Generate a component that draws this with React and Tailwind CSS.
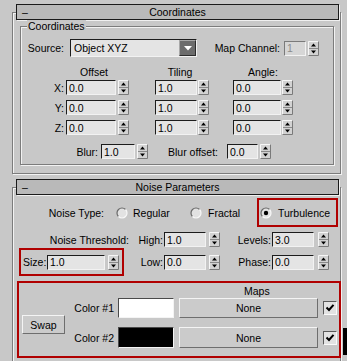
import React from "react";

const sunken =
  "border border-t-[#1c1c1c] border-l-[#1c1c1c] border-r-[#f2f2f2] border-b-[#f2f2f2]";
const raised =
  "border border-t-[#f4f4f4] border-l-[#f4f4f4] border-r-[#6e6e6e] border-b-[#6e6e6e]";

function Arrows() {
  return (
    <svg width="11" height="15" viewBox="0 0 11 15" className="shrink-0">
      <rect x="0" y="0" width="11" height="15" fill="#d2d2d2" />
      <path d="M0.5 14.5 V0.5 H10.5" stroke="#f6f6f6" fill="none" />
      <path d="M0.5 14.5 H10.5 V0.5" stroke="#7a7a7a" fill="none" />
      <path d="M1 7.5 H10" stroke="#8a8a8a" />
      <path d="M5.5 2.5 L8 5.5 L3 5.5 Z" fill="#000" />
      <path d="M3 9.5 L8 9.5 L5.5 12.5 Z" fill="#000" />
    </svg>
  );
}

function Spinner({ w, value, gap = "ml-[2px]", disabled }) {
  return (
    <div className="flex items-center shrink-0">
      <div
        className={`${w} h-[15px] flex items-center pl-[2px] ${
          disabled
            ? "bg-[#d6d6d6] text-[#8c8c8c] border border-t-[#7a7a7a] border-l-[#7a7a7a] border-r-[#f2f2f2] border-b-[#f2f2f2]"
            : `bg-[#e4e4e4] ${sunken}`
        }`}
      >
        {value}
      </div>
      <div className={gap}>
        <Arrows />
      </div>
    </div>
  );
}

function Radio({ on }) {
  return (
    <svg width="12" height="12" viewBox="0 0 12 12" className="shrink-0">
      <circle cx="6" cy="6" r="5" fill="#e2e2e2" />
      <path d="M2.46 9.54 A5 5 0 0 1 9.54 2.46" stroke="#6a6a6a" strokeWidth="1.2" fill="none" />
      <path d="M9.54 2.46 A5 5 0 0 1 2.46 9.54" stroke="#f8f8f8" strokeWidth="1.2" fill="none" />
      {on && <circle cx="6" cy="6" r="2.2" fill="#000" />}
    </svg>
  );
}

function Check() {
  return (
    <div className="w-[14px] h-[14px] bg-[#e2e2e2] border border-t-[#5a5a5a] border-l-[#5a5a5a] border-r-[#fafafa] border-b-[#fafafa] flex items-center justify-center">
      <svg width="10" height="10" viewBox="0 0 10 10">
        <path d="M1.5 4.5 L4 7 L8.5 1.8" stroke="#000" strokeWidth="2" fill="none" />
      </svg>
    </div>
  );
}

function Header({ title }) {
  return (
    <div className="-mt-[9px] ml-[3px] w-[323px] h-[16px] relative flex items-center justify-center bg-[#b9b9b9] border border-[#1a1a1a] shadow-[1px_1px_0_#f0f0f0]">
      <span className="absolute left-[5px] top-[1px]">–</span>
      <span>{title}</span>
    </div>
  );
}

export default function App() {
  return (
    <div className="w-[347px] h-[361px] bg-[#c8c8c8] relative overflow-hidden font-['Liberation_Sans',Arial,sans-serif] text-[10.5px] leading-[12px] text-black">
      {/* Coordinates rollout */}
      <div className="mt-[12px] ml-[12px] w-[329px] h-[162px] border border-[#7c7c7c] shadow-[inset_1px_1px_0_#f2f2f2,1px_1px_0_#f2f2f2]">
        <Header title="Coordinates" />
        <div className="mt-[6px] ml-[7px] w-[314px] h-[139px] relative border border-[#7c7c7c] shadow-[inset_1px_1px_0_#f2f2f2,1px_1px_0_#f2f2f2]">
          <span className="absolute -top-[7px] left-[6px] px-[1px] bg-[#c8c8c8]">Coordinates</span>

          <div className="mt-[12px] h-[18px] flex items-center">
            <span className="w-[49px] text-right pr-[6px] shrink-0">Source:</span>
            <div className={`w-[127px] h-[18px] flex items-center bg-[#e4e4e4] ${sunken}`}>
              <span className="flex-1 pl-[3px]">Object XYZ</span>
              <div className="w-[17px] h-[16px] flex items-center justify-center bg-[#6c6c6c] border border-t-[#a8a8a8] border-l-[#a8a8a8] border-r-[#2c2c2c] border-b-[#2c2c2c]">
                <svg width="8" height="5" viewBox="0 0 8 5">
                  <path d="M0 0 H8 L4 4.5 Z" fill="#fff" />
                </svg>
              </div>
            </div>
            <span className="w-[87px] text-right pr-[4px] shrink-0">Map Channel:</span>
            <Spinner w="w-[22px]" value="1" disabled />
          </div>

          <div className="mt-[9px] h-[12px] flex">
            <span className="ml-[45px] w-[56px] text-center">Offset</span>
            <span className="ml-[28px] w-[60px] text-center">Tiling</span>
            <span className="ml-[23px] w-[60px] text-center">Angle:</span>
          </div>

          {[
            ["X:", "mt-[2px]"],
            ["Y:", "mt-[5px]"],
            ["Z:", "mt-[5px]"],
          ].map(([l, m]) => (
            <div key={l} className={`${m} h-[15px] flex items-center`}>
              <span className="w-[45px] text-right pr-[2px] shrink-0">{l}</span>
              <Spinner w="w-[50px]" value="0.0" />
              <div className="ml-[26px]">
                <Spinner w="w-[42px]" value="1.0" gap="ml-[1px]" />
              </div>
              <div className="ml-[24px]">
                <Spinner w="w-[48px]" value="0.0" gap="ml-[1px]" />
              </div>
            </div>
          ))}

          <div className="mt-[9px] h-[15px] flex items-center">
            <span className="w-[80px] text-right pr-[3px] shrink-0">Blur:</span>
            <Spinner w="w-[34px]" value="1.0" />
            <span className="w-[79px] text-right pr-[9px] shrink-0">Blur offset:</span>
            <Spinner w="w-[31px]" value="0.0" />
          </div>
        </div>
      </div>

      {/* Noise Parameters rollout */}
      <div className="mt-[13px] ml-[12px] w-[329px] h-[200px] border border-[#7c7c7c] shadow-[inset_1px_1px_0_#f2f2f2,1px_1px_0_#f2f2f2]">
        <Header title="Noise Parameters" />

        <div className="mt-[3px] h-[29px] flex items-center">
          <span className="w-[100px] text-right pr-[9px] shrink-0">Noise Type:</span>
          <div className="ml-[3px]">
            <Radio />
          </div>
          <span className="ml-[5px] w-[57px] shrink-0">Regular</span>
          <Radio />
          <span className="ml-[6px] w-[49px] shrink-0">Fractal</span>
          <div className="w-[81px] h-[29px] border-2 border-[#b00000] flex items-center">
            <div className="ml-[1px]">
              <Radio on />
            </div>
            <span className="ml-[6px]">Turbulence</span>
          </div>
        </div>

        <div className="mt-[5px] h-[15px] flex items-center">
          <span className="w-[118px] text-right pr-[2px] shrink-0">Noise Threshold:</span>
          <span className="w-[33px] text-right pr-[1px] shrink-0">High:</span>
          <Spinner w="w-[42px]" value="1.0" gap="ml-[3px]" />
          <span className="w-[52px] text-right pr-[1px] shrink-0">Levels:</span>
          <Spinner w="w-[42px]" value="3.0" gap="ml-[4px]" />
        </div>

        <div className="mt-[1px] h-[28px] flex items-center">
          <div className="ml-[6px] w-[105px] h-[28px] border-2 border-[#b00000] flex items-center">
            <span className="w-[26px] pl-[2px] shrink-0">Size:</span>
            <Spinner w="w-[58px]" value="1.0" gap="ml-[3px]" />
          </div>
          <span className="w-[40px] text-right pr-[1px] shrink-0">Low:</span>
          <Spinner w="w-[42px]" value="0.0" gap="ml-[3px]" />
          <span className="w-[52px] text-right pr-[1px] shrink-0">Phase:</span>
          <Spinner w="w-[42px]" value="0.0" gap="ml-[4px]" />
        </div>

        <div className="mt-[5px] ml-[4px] w-[324px] h-[77px] border-2 border-[#b00000] flex">
          <div
            className={`mt-[32px] ml-[3px] w-[43px] h-[19px] flex items-center justify-center bg-[#cbcbcb] ${raised}`}
          >
            Swap
          </div>
          <div className="flex flex-col">
            <span className="mt-[2px] ml-[179px] h-[12px]">Maps</span>
            {[
              ["Color #1", "bg-white", "mt-[1px] h-[20px]"],
              ["Color #2", "bg-black", "mt-[9px] h-[21px]"],
            ].map(([l, c, m]) => (
              <div key={l} className={`${m} flex items-center`}>
                <span className="w-[53px] text-right pr-[4px] shrink-0">{l}</span>
                <div
                  className={`w-[56px] h-full ${c} border border-t-[#4a4a4a] border-l-[#4a4a4a] border-r-[#f4f4f4] border-b-[#f4f4f4]`}
                />
                <div
                  className={`ml-[5px] w-[139px] h-full flex items-center justify-center bg-[#cbcbcb] ${raised}`}
                >
                  None
                </div>
                <div className="ml-[5px]">
                  <Check />
                </div>
              </div>
            ))}
          </div>
        </div>
      </div>

      <div className="absolute right-0 top-[328px] w-[4px] h-[27px] bg-black" />
    </div>
  );
}
